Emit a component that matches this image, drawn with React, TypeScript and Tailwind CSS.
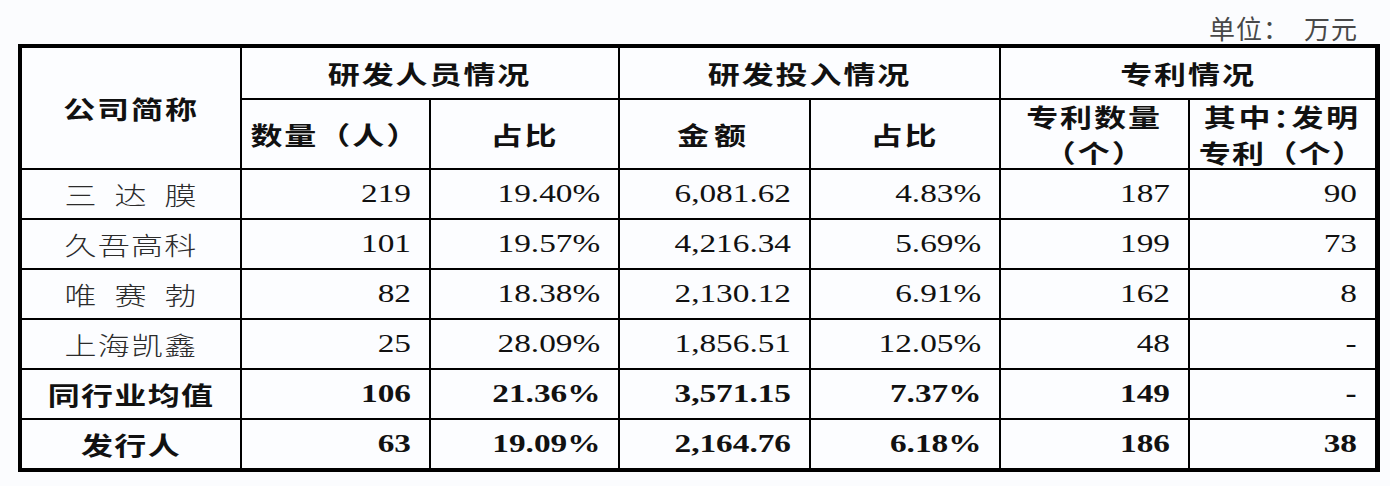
import React from "react";

type Row = { name: string; spaced?: boolean; bold?: boolean; v: string[] };

const rows: Row[] = [
  { name: "三达膜", spaced: true, v: ["219", "19.40%", "6,081.62", "4.83%", "187", "90"] },
  { name: "久吾高科", v: ["101", "19.57%", "4,216.34", "5.69%", "199", "73"] },
  { name: "唯赛勃", spaced: true, v: ["82", "18.38%", "2,130.12", "6.91%", "162", "8"] },
  { name: "上海凯鑫", v: ["25", "28.09%", "1,856.51", "12.05%", "48", "-"] },
  { name: "同行业均值", bold: true, v: ["106", "21.36%", "3,571.15", "7.37%", "149", "-"] },
  { name: "发行人", bold: true, v: ["63", "19.09%", "2,164.76", "6.18%", "186", "38"] },
];

const cjk = "font-['Noto_Sans_CJK_SC',sans-serif]";
const serif = "font-['Liberation_Serif','Noto_Sans_CJK_SC',serif]";

function HeadText({ children, className = "" }: { children: React.ReactNode; className?: string }) {
  return (
    <span
      className={`inline-block scale-x-[1.28] text-[25px] leading-[36px] font-bold tracking-[1.5px] text-[#111] ${cjk} ${className}`}
    >
      {children}
    </span>
  );
}

function HeadCell({ children, className = "" }: { children: React.ReactNode; className?: string }) {
  return (
    <div className={`flex flex-col items-center justify-center bg-[#fcfdff] ${className}`}>{children}</div>
  );
}

export default function App() {
  return (
    <div className="w-[1390px] h-[486px] overflow-hidden bg-[#fbfcfe]">
      <div className="h-[44px] flex items-end justify-end pr-[32px] pb-[3px]">
        <span className={`text-[26px] leading-[26px] tracking-[1px] text-[#484848] font-normal ${cjk}`}>
          单位：　万元
        </span>
      </div>
      <div className="ml-[18px] w-fit grid grid-cols-[218px_187px_187px_189px_188px_187px_185px] grid-rows-[50px_68px_repeat(6,48px)] gap-[2px] bg-black border-l-4 border-t-4 border-r-[5px] border-b-4 border-black">
        <HeadCell className="row-span-2">
          <HeadText>公司简称</HeadText>
        </HeadCell>
        <HeadCell className="col-span-2">
          <HeadText>研发人员情况</HeadText>
        </HeadCell>
        <HeadCell className="col-span-2">
          <HeadText>研发投入情况</HeadText>
        </HeadCell>
        <HeadCell className="col-span-2">
          <HeadText>专利情况</HeadText>
        </HeadCell>

        <HeadCell>
          <HeadText className="tracking-[0px]">数量（人）</HeadText>
        </HeadCell>
        <HeadCell>
          <HeadText>占比</HeadText>
        </HeadCell>
        <HeadCell>
          <HeadText className="tracking-[4px]">金额</HeadText>
        </HeadCell>
        <HeadCell>
          <HeadText>占比</HeadText>
        </HeadCell>
        <HeadCell>
          <HeadText>专利数量</HeadText>
          <HeadText>（个）</HeadText>
        </HeadCell>
        <HeadCell>
          <HeadText className="scale-x-[1.2] tracking-[2px]">
            其中<span className="[font-feature-settings:'halt']">：</span>发明
          </HeadText>
          <HeadText className="scale-x-[1.2] tracking-[1px]">专利（个）</HeadText>
        </HeadCell>

        {rows.map((r) => (
          <React.Fragment key={r.name}>
            <div className="flex items-center justify-center bg-[#fcfdff]">
              {r.spaced ? (
                <span
                  className={`inline-flex gap-[14px] scale-x-[1.28] text-[25px] leading-[30px] font-light text-[#2b2b2b] ${cjk}`}
                >
                  {r.name.split("").map((c) => (
                    <span key={c}>{c}</span>
                  ))}
                </span>
              ) : (
                <span
                  className={`inline-block scale-x-[1.28] text-[25px] leading-[30px] tracking-[1px] ${
                    r.bold ? "font-bold text-[#111]" : "font-light text-[#2b2b2b]"
                  } ${cjk}`}
                >
                  {r.name}
                </span>
              )}
            </div>
            {r.v.map((val, i) => (
              <div key={i} className="flex items-center justify-end pr-[18px] bg-[#fcfdff]">
                <span
                  className={`inline-block origin-right scale-x-[1.28] text-[26px] leading-[30px] text-[#111] ${
                    r.bold ? "font-bold" : "font-normal"
                  } ${serif}`}
                >
                  {val}
                </span>
              </div>
            ))}
          </React.Fragment>
        ))}
      </div>
    </div>
  );
}
